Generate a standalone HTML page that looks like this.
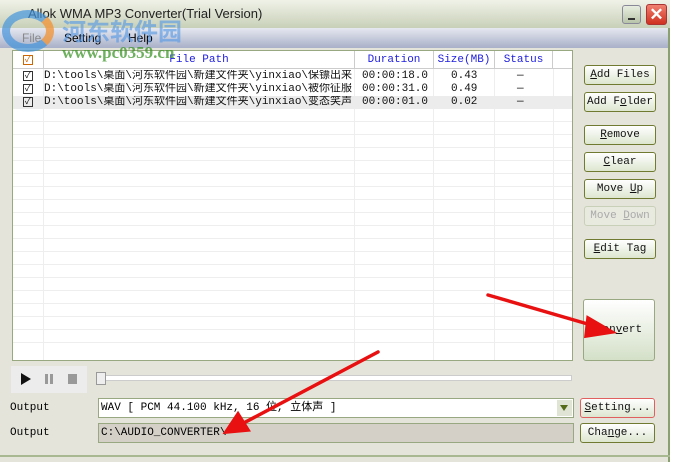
<!DOCTYPE html>
<html><head><meta charset="utf-8"><style>
*{margin:0;padding:0;box-sizing:border-box}
body{width:681px;height:462px;overflow:hidden;background:#fff;position:relative;font-family:"Liberation Mono","Noto Sans CJK SC",monospace;font-size:11px}
.a{position:absolute}
.win{left:0;top:0;width:670px;height:462px;background:#e4e4da;border-right:2px solid #8aa070}
.title{left:0;top:0;width:670px;height:28px;background:linear-gradient(#f0f2e8,#c8d0b8);font-family:"Liberation Sans",sans-serif;font-size:13px;color:#222}
.menu{left:0;top:28px;width:668px;height:20px;background:linear-gradient(#e6e8f0,#a8b0c8);font-family:"Liberation Sans",sans-serif;font-size:12px}
.list{left:12px;top:50px;width:561px;height:311px;background:#fff;border:1px solid #98a880}
.hdr{top:0;height:18px;background:#fff;border-bottom:1px solid #ccc;color:#2020e0;font-size:11px;text-align:center;line-height:18px}
.row{left:0;width:559px;height:13px;line-height:13px;font-size:11px;color:#111;white-space:nowrap}
.vl{top:18px;width:1px;height:291px;background:#eee}
.hl{left:0;width:559px;height:1px;background:#eee}
.btn{width:72px;height:20px;border:1px solid #707a30;border-radius:3px;background:linear-gradient(#fff,#dde6d0);text-align:center;line-height:18px;font-size:11px;color:#111}
.cb{width:10px;height:10px;border:1px solid #333;font-size:9px;line-height:8px;text-align:center}
</style></head><body>
<div class="a win"></div>
<div class="a title"><span class="a" style="left:28px;top:6px">Allok WMA MP3 Converter(Trial Version)</span>
<div class="a" style="left:622px;top:5px;width:19px;height:19px;border-radius:3px;background:linear-gradient(#e8eee0,#b8c4a8);border:1px solid #889"><div class="a" style="left:5px;top:12px;width:7px;height:2px;background:#333"></div></div>
<div class="a" style="left:646px;top:4px;width:21px;height:21px;border-radius:3px;background:linear-gradient(#f08070,#d03020);border:1px solid #a33;color:#fff;font:bold 17px 'Liberation Sans';text-align:center;line-height:19px">✕</div></div>
<div class="a menu"><span class="a" style="left:22px;top:3px;color:#888">File</span><span class="a" style="left:64px;top:3px">Setting</span><span class="a" style="left:128px;top:3px">Help</span></div>
<div class="a list">
<div class="a hdr" style="left:0;width:559px"></div>
<div class="a cb" style="left:10px;top:4px;color:#c60;border-color:#c60">✓</div>
<div class="a hdr" style="left:30px;width:311px;border-left:1px solid #ccc">File Path</div>
<div class="a hdr" style="left:341px;width:79px;border-left:1px solid #ccc">Duration</div>
<div class="a hdr" style="left:420px;width:61px;border-left:1px solid #ccc">Size(MB)</div>
<div class="a hdr" style="left:481px;width:59px;border-left:1px solid #ccc;border-right:1px solid #ccc">Status</div>
<div class="a vl" style="left:30px"></div><div class="a vl" style="left:341px"></div><div class="a vl" style="left:420px"></div><div class="a vl" style="left:481px"></div><div class="a vl" style="left:540px"></div>
<div class="a hl" style="top:57px"></div><div class="a hl" style="top:70px"></div><div class="a hl" style="top:83px"></div><div class="a hl" style="top:96px"></div><div class="a hl" style="top:109px"></div><div class="a hl" style="top:122px"></div><div class="a hl" style="top:135px"></div><div class="a hl" style="top:148px"></div><div class="a hl" style="top:161px"></div><div class="a hl" style="top:174px"></div><div class="a hl" style="top:187px"></div><div class="a hl" style="top:200px"></div><div class="a hl" style="top:213px"></div><div class="a hl" style="top:226px"></div><div class="a hl" style="top:239px"></div><div class="a hl" style="top:252px"></div><div class="a hl" style="top:265px"></div><div class="a hl" style="top:278px"></div><div class="a hl" style="top:291px"></div>
<div class="a row" style="top:19px"><div class="a cb" style="left:10px;top:1px">✓</div><span class="a" style="left:31px;width:310px;overflow:hidden">D:\tools\桌面\河东软件园\新建文件夹\yinxiao\保镖出来</span><span class="a" style="left:349px">00:00:18.0</span><span class="a" style="left:438px">0.43</span><span class="a" style="left:504px">—</span></div>
<div class="a row" style="top:32px"><div class="a cb" style="left:10px;top:1px">✓</div><span class="a" style="left:31px;width:310px;overflow:hidden">D:\tools\桌面\河东软件园\新建文件夹\yinxiao\被你征服</span><span class="a" style="left:349px">00:00:31.0</span><span class="a" style="left:438px">0.49</span><span class="a" style="left:504px">—</span></div>
<div class="a row" style="top:45px;background:#ececec"><div class="a cb" style="left:10px;top:1px">✓</div><span class="a" style="left:31px;width:310px;overflow:hidden">D:\tools\桌面\河东软件园\新建文件夹\yinxiao\变态笑声</span><span class="a" style="left:349px">00:00:01.0</span><span class="a" style="left:438px">0.02</span><span class="a" style="left:504px">—</span></div>
</div>
<div class="a" style="left:2px;top:10px;width:52px;height:42px;border-radius:50%;border:8px solid rgba(70,150,220,.7);border-right-color:rgba(240,150,60,.8)"></div>
<div class="a" style="left:62px;top:12px;font:bold 24px 'Noto Sans CJK SC',sans-serif;color:rgba(80,150,230,.6)">河东软件园</div>
<div class="a" style="left:62px;top:43px;font:bold 17px 'Liberation Serif',serif;color:rgba(60,150,40,.75)">www.pc0359.cn</div>
<div class="a btn" style="left:584px;top:65px"><u>A</u>dd Files</div>
<div class="a btn" style="left:584px;top:92px">Add F<u>o</u>lder</div>
<div class="a btn" style="left:584px;top:125px"><u>R</u>emove</div>
<div class="a btn" style="left:584px;top:152px"><u>C</u>lear</div>
<div class="a btn" style="left:584px;top:179px">Move <u>U</u>p</div>
<div class="a btn" style="left:584px;top:206px;color:#aaa;border-color:#c8d0b8;background:#e8eae0">Move <u>D</u>own</div>
<div class="a btn" style="left:584px;top:239px"><u>E</u>dit Tag</div>
<div class="a btn" style="left:583px;top:299px;height:62px;line-height:60px;border-color:#98a880;background:linear-gradient(#fff,#d4e0c8)">Con<u>v</u>ert</div>
<div class="a" style="left:11px;top:366px;width:76px;height:27px;background:#ececec"></div>
<div class="a" style="left:21px;top:373px;width:0;height:0;border-left:10px solid #111;border-top:6px solid transparent;border-bottom:6px solid transparent"></div>
<div class="a" style="left:45px;top:374px;width:3px;height:10px;background:#999"></div><div class="a" style="left:50px;top:374px;width:3px;height:10px;background:#999"></div>
<div class="a" style="left:68px;top:374px;width:9px;height:10px;background:#999"></div>
<div class="a" style="left:101px;top:375px;width:471px;height:6px;border:1px solid #ccc;background:#fff"></div>
<div class="a" style="left:96px;top:372px;width:10px;height:13px;border:1px solid #999;background:#eee"></div>
<span class="a" style="left:10px;top:402px">Output</span>
<span class="a" style="left:10px;top:427px">Output</span>
<div class="a" style="left:98px;top:398px;width:476px;height:20px;border:1px solid #98a880;background:#fff;line-height:18px;padding-left:2px">WAV [ PCM 44.100 kHz, 16 位, 立体声 ]</div>
<div class="a" style="left:557px;top:400px;width:15px;height:16px;background:#e0e4d4"><div class="a" style="left:3px;top:5px;border-top:6px solid #556b1a;border-left:4px solid transparent;border-right:4px solid transparent"></div></div>
<div class="a" style="left:98px;top:423px;width:476px;height:20px;border:1px solid #98a880;background:#d4d0c8;line-height:18px;padding-left:2px">C:\AUDIO_CONVERTER\</div>
<div class="a btn" style="left:580px;top:398px;width:75px;border-color:#e06060"><u>S</u>etting...</div>
<div class="a btn" style="left:580px;top:423px;width:75px">Cha<u>n</u>ge...</div>
<div class="a" style="left:0;top:455px;width:670px;height:2px;background:#a8b890"></div>
<svg class="a" style="left:0;top:0" width="681" height="462"><g stroke="#e81010" stroke-width="3.5" fill="#e81010" stroke-linecap="round">
<line x1="488" y1="295" x2="598" y2="327"/><polygon points="612,332 588,318 586,336"/>
<line x1="378" y1="352" x2="238" y2="426"/><polygon points="226,432 238,414 248,430"/></g></svg>
</body></html>
